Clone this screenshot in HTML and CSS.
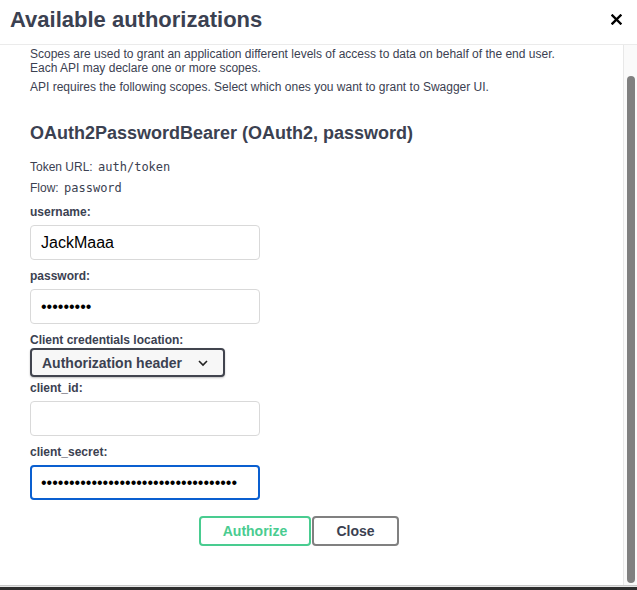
FILE: index.html
```html
<!DOCTYPE html>
<html lang="en">
<head>
<meta charset="utf-8">
<title>Available authorizations</title>
<link rel="stylesheet" href="styles.css">
</head>
<body>
<div class="modal">
  <header class="hdr">
    <h2 class="title">Available authorizations</h2>
    <button class="xbtn" aria-label="Close">
      <svg width="11" height="11" viewBox="0 0 11 11"><path d="M1.5 1.5 L9.5 9.5 M9.5 1.5 L1.5 9.5" stroke="#000" stroke-width="2.4" stroke-linecap="square"/></svg>
    </button>
  </header>
  <div class="main">
    <div class="content">
      <p class="txt">Scopes are used to grant an application different levels of access to data on behalf of the end user.<br>Each API may declare one or more scopes.</p>
      <p class="txt gap5">API requires the following scopes. Select which ones you want to grant to Swagger UI.</p>
      <h4 class="scheme">OAuth2PasswordBearer (OAuth2, password)</h4>
      <p class="txt meta1">Token URL: <code class="code">auth/token</code></p>
      <p class="txt meta2">Flow: <code class="code">password</code></p>
      <label class="lbl l-first">username:</label>
      <input class="inp" type="text" value="JackMaaa">
      <label class="lbl">password:</label>
      <input class="inp" type="password" value="secret123">
      <label class="lbl">Client credentials location:</label>
      <div class="select">
        <span>Authorization header</span>
        <svg width="12" height="8" viewBox="0 0 12 8"><path d="M2 2 L6 6 L10 2" fill="none" stroke="#222" stroke-width="1.6"/></svg>
      </div>
      <label class="lbl l-after-select">client_id:</label>
      <input class="inp" type="text" value="">
      <label class="lbl">client_secret:</label>
      <input class="inp focus" type="password" value="abcdefghijklmnopqrstuvwxyz123456789">
      <div class="btns">
        <button class="btn auth">Authorize</button>
        <button class="btn close">Close</button>
      </div>
    </div>
    <div class="track"><div class="thumb"></div></div>
  </div>
  <div class="bottom"></div>
</div>
</body>
</html>
```
FILE: styles.css
```css
* { box-sizing: border-box; }
html, body { margin: 0; padding: 0; background: #fff; }
body { font-family: "Liberation Sans", Arial, sans-serif; color: #3b4151; }

.modal { width: 637px; height: 590px; display: flex; flex-direction: column; overflow: hidden; }

.hdr {
  height: 45px;
  flex: none;
  display: flex;
  align-items: center;
  justify-content: space-between;
  border-bottom: 1px solid #ebebeb;
  padding: 0 15px 0 10px;
}
.title { margin: 0; font-size: 22px; font-weight: 700; color: #3b4151; line-height: 26px; position: relative; top: -2px; }
.xbtn { border: 0; background: none; padding: 0; width: 11px; height: 11px; display: flex; position: relative; top: -3px; }

.main { flex: 1; display: flex; min-height: 0; }
.content { flex: 1; padding: 2px 0 0 30px; display: flex; flex-direction: column; align-items: flex-start; }

.track {
  width: 14px;
  flex: none;
  background: #fafafa;
  border-left: 1px solid #e8e8e8;
  padding: 31px 1px 2px 3px;
}
.thumb { width: 8px; height: 100%; background: #808080; border-radius: 4px; }

.bottom {
  height: 5px;
  flex: none;
  background: linear-gradient(#c8c8c8 0 1px, #e6e6e6 1px 2px, #2e2e2e 2px);
}

.txt { margin: 0; font-size: 12px; line-height: 14px; color: #3b4151; }
.gap5 { margin-top: 5px; }
.scheme { margin: 29px 0 0; font-size: 18px; line-height: 20px; font-weight: 700; color: #3b4151; }
.meta1 { margin-top: 17px; }
.meta2 { margin-top: 7px; }
.code { font-family: "DejaVu Sans Mono", "Liberation Mono", monospace; font-size: 12px; margin-left: 2px; color: #3b4151; }

.lbl { display: block; font-size: 12px; line-height: 14px; font-weight: 700; color: #3b4151; margin-top: 9px; }
.l-first { margin-top: 10px; }
.l-after-select { margin-top: 4px; }

.inp {
  display: block;
  width: 230px;
  height: 35px;
  margin-top: 6px;
  border: 1px solid #d9d9d9;
  border-radius: 4px;
  padding: 0 10px;
  font-family: "Liberation Sans", Arial, sans-serif;
  font-size: 16px;
  color: #000;
  background: #fff;
  outline: none;
}
.inp.focus { border: 2px solid #0a5fd0; padding: 0 9px; }

.select {
  margin-top: 1px;
  width: 195px;
  height: 29px;
  border: 2px solid #41444e;
  border-radius: 4px;
  background: #f7f7f7;
  box-shadow: 0 1px 2px rgba(0,0,0,.25);
  display: flex;
  align-items: center;
  justify-content: space-between;
  padding: 0 14px 0 10px;
  font-size: 14px;
  font-weight: 700;
  color: #3b4151;
}
.select svg { display: block; }

.btns { display: flex; gap: 1px; margin-top: 16px; padding-left: 169px; }
.btn {
  height: 30px;
  border-radius: 4px;
  background: #fff;
  font-family: "Liberation Sans", Arial, sans-serif;
  font-size: 14px;
  font-weight: 700;
  padding: 0;
}
.auth { width: 112px; border: 2px solid #49cc90; color: #49cc90; }
.close { width: 87px; border: 2px solid #808080; color: #3b4151; }
```
